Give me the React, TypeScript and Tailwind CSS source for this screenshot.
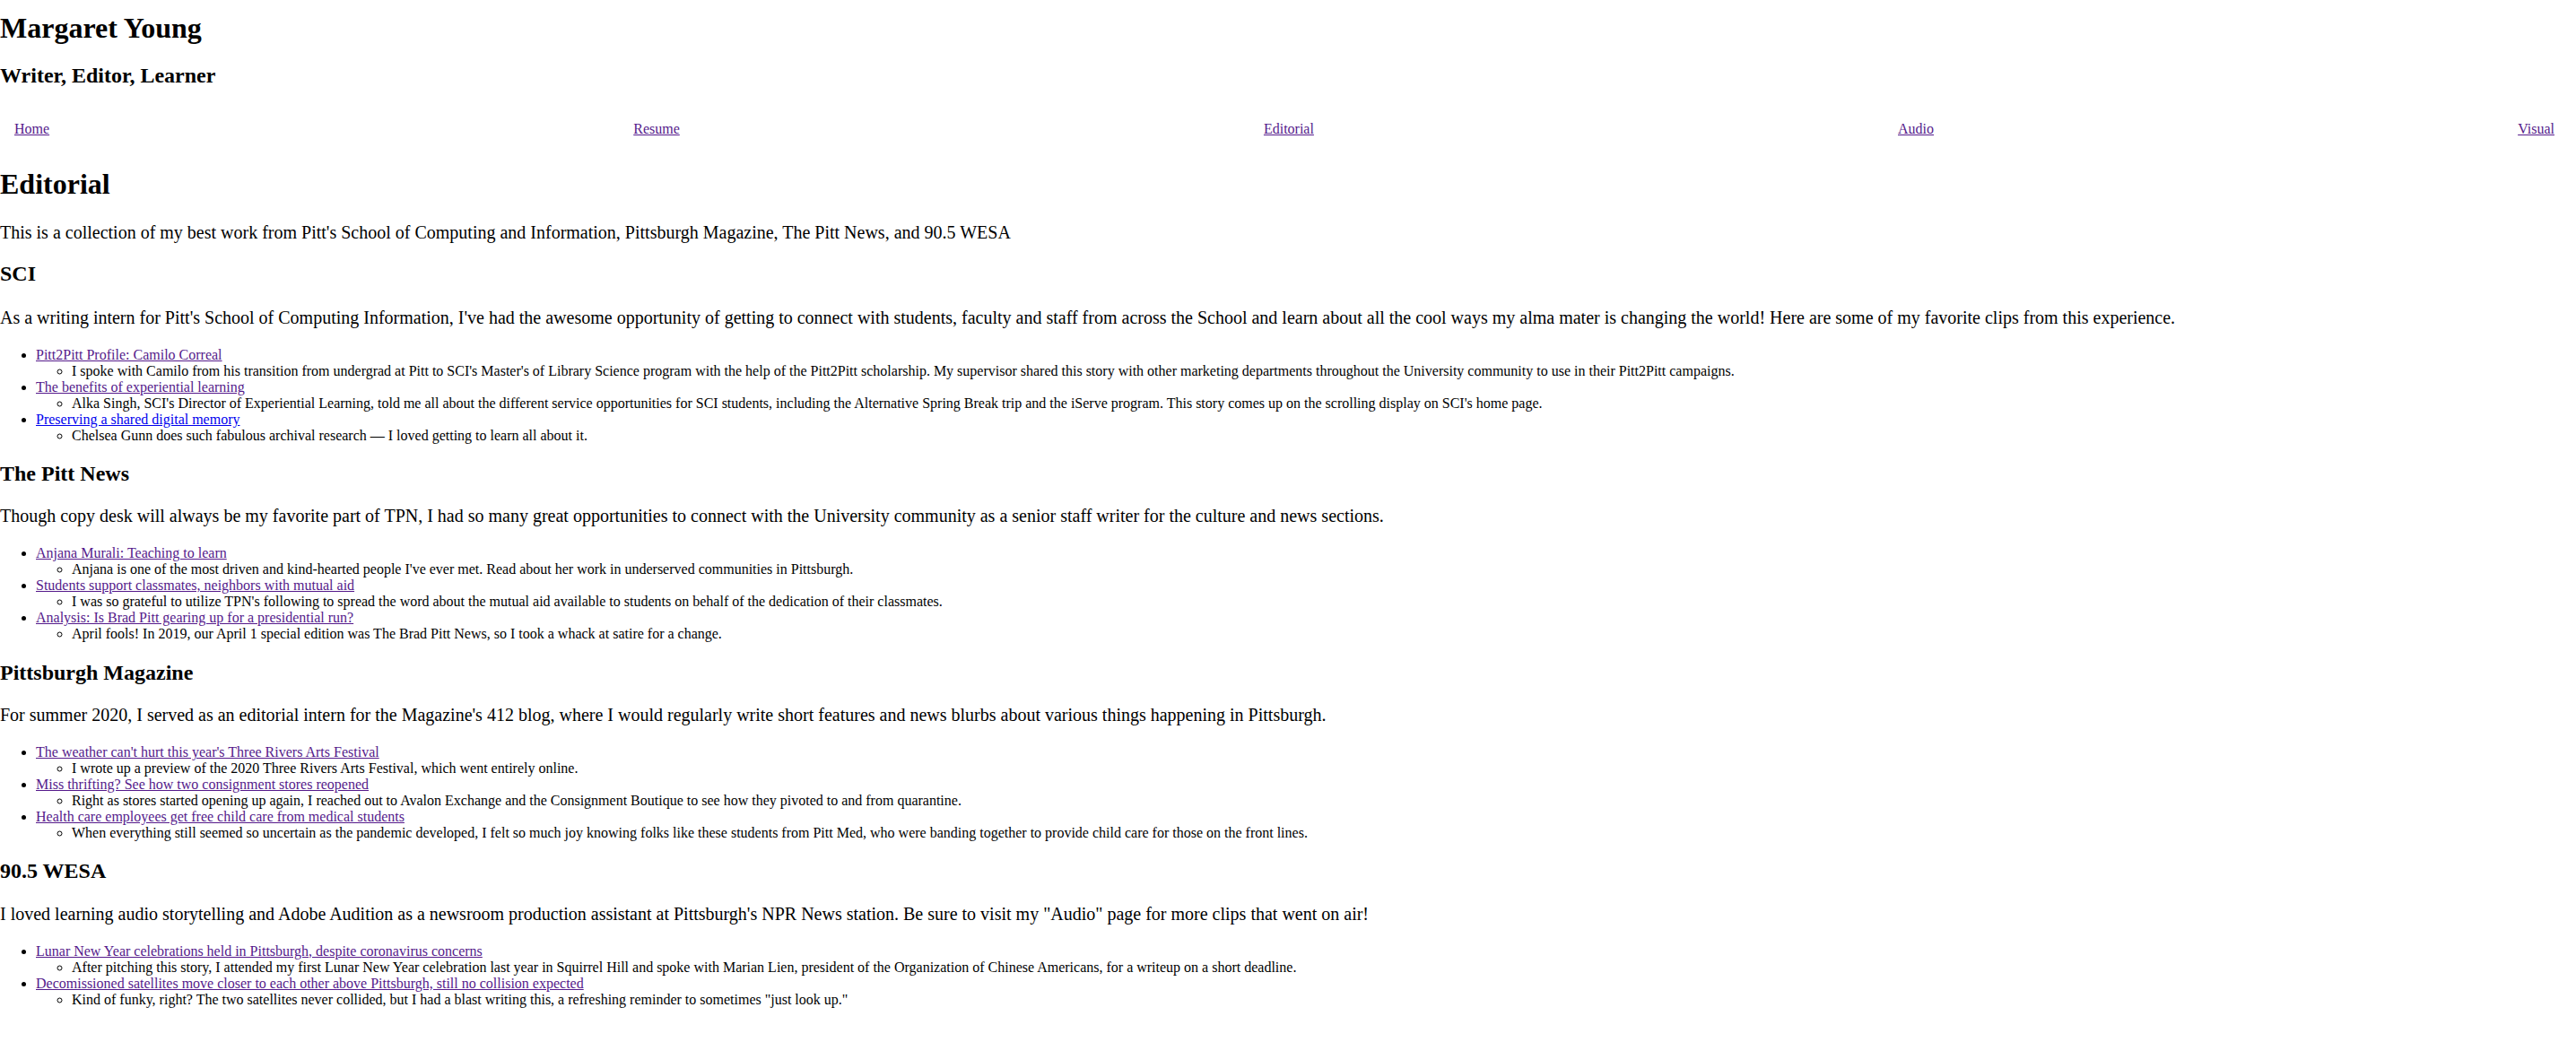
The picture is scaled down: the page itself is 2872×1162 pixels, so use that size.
const navLinks = ['Home', 'Resume', 'Editorial', 'Audio', 'Visual'];

type Clip = { title: string; blurb: string; visited?: boolean };
type Section = { name: string; intro: string; clips: Clip[] };

const sections: Section[] = [
    {
        name: 'SCI',
        intro: "As a writing intern for Pitt's School of Computing Information, I've had the awesome opportunity of getting to connect with students, faculty and staff from across the School and learn about all the cool ways my alma mater is changing the world! Here are some of my favorite clips from this experience.",
        clips: [
            {
                title: 'Pitt2Pitt Profile: Camilo Correal',
                blurb: "I spoke with Camilo from his transition from undergrad at Pitt to SCI's Master's of Library Science program with the help of the Pitt2Pitt scholarship. My supervisor shared this story with other marketing departments throughout the University community to use in their Pitt2Pitt campaigns.",
                visited: true,
            },
            {
                title: 'The benefits of experiential learning',
                blurb: "Alka Singh, SCI's Director of Experiential Learning, told me all about the different service opportunities for SCI students, including the Alternative Spring Break trip and the iServe program. This story comes up on the scrolling display on SCI's home page.",
                visited: true,
            },
            {
                title: 'Preserving a shared digital memory',
                blurb: 'Chelsea Gunn does such fabulous archival research — I loved getting to learn all about it.',
                visited: false,
            },
        ],
    },
    {
        name: 'The Pitt News',
        intro: 'Though copy desk will always be my favorite part of TPN, I had so many great opportunities to connect with the University community as a senior staff writer for the culture and news sections.',
        clips: [
            {
                title: 'Anjana Murali: Teaching to learn',
                blurb: "Anjana is one of the most driven and kind-hearted people I've ever met. Read about her work in underserved communities in Pittsburgh.",
                visited: true,
            },
            {
                title: 'Students support classmates, neighbors with mutual aid',
                blurb: "I was so grateful to utilize TPN's following to spread the word about the mutual aid available to students on behalf of the dedication of their classmates.",
                visited: true,
            },
            {
                title: 'Analysis: Is Brad Pitt gearing up for a presidential run?',
                blurb: 'April fools! In 2019, our April 1 special edition was The Brad Pitt News, so I took a whack at satire for a change.',
                visited: true,
            },
        ],
    },
    {
        name: 'Pittsburgh Magazine',
        intro: "For summer 2020, I served as an editorial intern for the Magazine's 412 blog, where I would regularly write short features and news blurbs about various things happening in Pittsburgh.",
        clips: [
            {
                title: "The weather can't hurt this year's Three Rivers Arts Festival",
                blurb: 'I wrote up a preview of the 2020 Three Rivers Arts Festival, which went entirely online.',
                visited: true,
            },
            {
                title: 'Miss thrifting? See how two consignment stores reopened',
                blurb: 'Right as stores started opening up again, I reached out to Avalon Exchange and the Consignment Boutique to see how they pivoted to and from quarantine.',
                visited: true,
            },
            {
                title: 'Health care employees get free child care from medical students',
                blurb: 'When everything still seemed so uncertain as the pandemic developed, I felt so much joy knowing folks like these students from Pitt Med, who were banding together to provide child care for those on the front lines.',
                visited: true,
            },
        ],
    },
    {
        name: '90.5 WESA',
        intro: 'I loved learning audio storytelling and Adobe Audition as a newsroom production assistant at Pittsburgh\'s NPR News station. Be sure to visit my "Audio" page for more clips that went on air!',
        clips: [
            {
                title: 'Lunar New Year celebrations held in Pittsburgh, despite coronavirus concerns',
                blurb: 'After pitching this story, I attended my first Lunar New Year celebration last year in Squirrel Hill and spoke with Marian Lien, president of the Organization of Chinese Americans, for a writeup on a short deadline.',
                visited: true,
            },
            {
                title: 'Decomissioned satellites move closer to each other above Pittsburgh, still no collision expected',
                blurb: 'Kind of funky, right? The two satellites never collided, but I had a blast writing this, a refreshing reminder to sometimes "just look up."',
                visited: true,
            },
        ],
    },
];

const App = () => {
    return (
        <div className="min-h-screen bg-white text-black font-['Liberation_Serif',serif]">
            {/* header */}
            <h1 className="pt-[13px] text-[32px] leading-[36.8px] font-bold">Margaret Young</h1>
            <h2 className="mt-[21px] text-[24px] leading-[27.6px] font-bold">Writer, Editor, Learner</h2>

            <nav className="mt-[37px] flex justify-between pl-4 pr-6 text-[16px] leading-[18px]">
                {navLinks.map((link) => (
                    <a key={link} href="#" className="text-[#551a8b] underline">
                        {link}
                    </a>
                ))}
            </nav>

            <h1 className="mt-[34px] text-[32px] leading-[36.8px] font-bold">Editorial</h1>
            <p className="mt-[24px] text-[20px] leading-[23px]">
                This is a collection of my best work from Pitt's School of Computing and Information, Pittsburgh Magazine, The Pitt News, and 90.5 WESA
            </p>

            {sections.map((section, i) => (
                <section key={section.name}>
                    <h2 className={`${i === 0 ? 'mt-[21px]' : 'mt-[20.5px]'} text-[24px] leading-[27.6px] font-bold`}>
                        {section.name}
                    </h2>
                    <p className={`${i === 0 ? 'mt-[23px]' : 'mt-[21.5px]'} text-[20px] leading-[23px]`}>{section.intro}</p>
                    <ul className="mt-[21px] list-disc pl-10 text-[16px] leading-[18px]">
                        {section.clips.map((clip) => (
                            <li key={clip.title}>
                                <a href="#" className={clip.visited ? 'text-[#551a8b] underline' : 'text-[#0000ee] underline'}>
                                    {clip.title}
                                </a>
                                <ul className="list-[circle] pl-10">
                                    <li>{clip.blurb}</li>
                                </ul>
                            </li>
                        ))}
                    </ul>
                </section>
            ))}
        </div>
    );
};

export default App;
